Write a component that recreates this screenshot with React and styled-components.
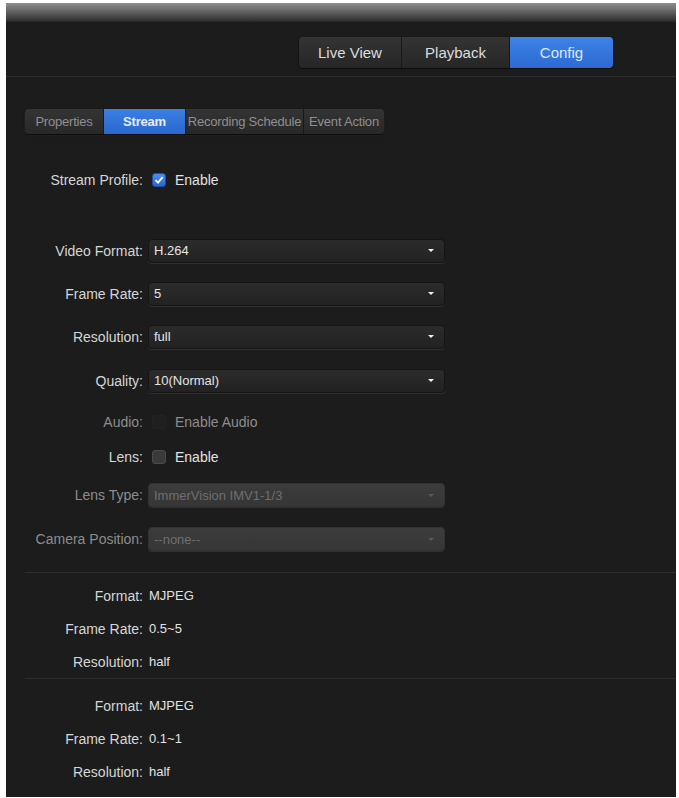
import React from "react";
import styled, { createGlobalStyle } from "styled-components";

const GlobalStyle = createGlobalStyle`
  html, body {
    margin: 0;
    padding: 0;
    background: #ffffff;
    font-family: "Liberation Sans", Arial, sans-serif;
  }
`;

const navItems = [
  { label: "Live View", width: 102 },
  { label: "Playback", width: 107 },
  { label: "Config", width: 103, active: true },
];

const tabs = [
  { label: "Properties", width: 78 },
  { label: "Stream", width: 81, active: true },
  { label: "Recording Schedule", width: 117 },
  { label: "Event Action", width: 80 },
];

const profiles = [
  {
    pad: 6,
    rows: [
      ["Format:", "MJPEG"],
      ["Frame Rate:", "0.5~5"],
      ["Resolution:", "half"],
    ],
  },
  {
    pad: 10,
    rows: [
      ["Format:", "MJPEG"],
      ["Frame Rate:", "0.1~1"],
      ["Resolution:", "half"],
    ],
  },
];

export default function App() {
  return (
    <>
      <GlobalStyle />
      <Frame>
        <Header />
        <NavBar>
          <NavGroup>
            {navItems.map((n) => (
              <NavButton key={n.label} $w={n.width} $active={n.active}>
                {n.label}
              </NavButton>
            ))}
          </NavGroup>
        </NavBar>

        <Content>
          <TabGroup>
            {tabs.map((t) => (
              <Tab key={t.label} $w={t.width} $active={t.active}>
                {t.label}
              </Tab>
            ))}
          </TabGroup>

          <Form>
            <Row $h={30}>
              <Label>Stream Profile:</Label>
              <Check $checked>
                <svg width="10" height="10" viewBox="0 0 10 10">
                  <path d="M1.5 5.2 L4 7.6 L8.6 2.2" fill="none" stroke="#fff" strokeWidth="1.8" />
                </svg>
              </Check>
              <CheckText>Enable</CheckText>
            </Row>

            <Row $h={43} $top={34}>
              <Label>Video Format:</Label>
              <Select>
                <span>H.264</span>
                <Caret />
              </Select>
            </Row>
            <Row $h={43}>
              <Label>Frame Rate:</Label>
              <Select>
                <span>5</span>
                <Caret />
              </Select>
            </Row>
            <Row $h={43}>
              <Label>Resolution:</Label>
              <Select>
                <span>full</span>
                <Caret />
              </Select>
            </Row>
            <Row $h={45}>
              <Label>Quality:</Label>
              <Select>
                <span>10(Normal)</span>
                <Caret />
              </Select>
            </Row>
            <Row $h={38}>
              <Label $dim>Audio:</Label>
              <Check $hidden />
              <CheckText $dim>Enable Audio</CheckText>
            </Row>
            <Row $h={32}>
              <Label>Lens:</Label>
              <Check />
              <CheckText>Enable</CheckText>
            </Row>
            <Row $h={44}>
              <Label $dim>Lens Type:</Label>
              <Select $disabled>
                <span>ImmerVision IMV1-1/3</span>
                <Caret $dim />
              </Select>
            </Row>
            <Row $h={44}>
              <Label $dim>Camera Position:</Label>
              <Select $disabled>
                <span>--none--</span>
                <Caret $dim />
              </Select>
            </Row>
          </Form>

          {profiles.map((p, i) => (
            <React.Fragment key={i}>
              <Divider />
              <Profile $pad={p.pad}>
                {p.rows.map(([k, v]) => (
                  <Row key={k} $h={33}>
                    <Label>{k}</Label>
                    <Value>{v}</Value>
                  </Row>
                ))}
              </Profile>
            </React.Fragment>
          ))}
        </Content>
      </Frame>
    </>
  );
}

const Frame = styled.div`
  margin: 3px 3px 0 6px;
  height: 794px;
  background: #1c1c1c;
  overflow: hidden;
`;

const Header = styled.div`
  height: 19px;
  background: linear-gradient(#8e8e8e, #626262 45%, #3a3a3a 85%, #262626);
`;

const NavBar = styled.div`
  height: 55px;
  box-sizing: border-box;
  padding: 15px 63px 0 0;
  display: flex;
  justify-content: flex-end;
  align-items: flex-start;
  border-bottom: 1px solid #2d2d2d;
`;

const NavGroup = styled.div`
  display: flex;
  border-radius: 4px;
  overflow: hidden;
  box-shadow: 0 1px 2px rgba(0, 0, 0, 0.9), 0 2px 1px rgba(255, 255, 255, 0.05);
`;

const NavButton = styled.div`
  width: ${(p) => p.$w}px;
  height: 31px;
  display: flex;
  align-items: center;
  justify-content: center;
  font-size: 15px;
  color: ${(p) => (p.$active ? "#dfe9fb" : "#dcdcdc")};
  background: ${(p) =>
    p.$active
      ? "linear-gradient(#3d83e6, #2d6ad2)"
      : "linear-gradient(#343434, #262626)"};
  & + & {
    border-left: 1px solid #181818;
  }
`;

const Content = styled.div`
  padding-top: 32px;
`;

const TabGroup = styled.div`
  margin-left: 19px;
  display: inline-flex;
  border-radius: 4px;
  overflow: hidden;
  box-shadow: 0 1px 2px rgba(0, 0, 0, 0.9), 0 1px 0 1px rgba(255, 255, 255, 0.06);
`;

const Tab = styled.div`
  width: ${(p) => p.$w}px;
  height: 25px;
  display: flex;
  align-items: center;
  justify-content: center;
  font-size: 13px;
  letter-spacing: -0.2px;
  white-space: nowrap;
  color: ${(p) => (p.$active ? "#e8eefa" : "#8f8f8f")};
  font-weight: ${(p) => (p.$active ? "bold" : "normal")};
  background: ${(p) =>
    p.$active
      ? "linear-gradient(#3b80e3, #2b67cf)"
      : "linear-gradient(#343434, #282828)"};
  & + & {
    border-left: 1px solid #1a1a1a;
  }
`;

const Form = styled.div`
  margin-top: 31px;
  padding-bottom: 11px;
`;

const Divider = styled.div`
  margin-left: 19px;
  height: 1px;
  background: #2c2c2c;
`;

const Row = styled.div`
  height: ${(p) => p.$h}px;
  margin-top: ${(p) => p.$top || 0}px;
  display: flex;
  align-items: center;
`;

const Label = styled.div`
  width: 137px;
  flex-shrink: 0;
  text-align: right;
  font-size: 14px;
  color: ${(p) => (p.$dim ? "#8c8c8c" : "#d6d6d6")};
  margin-right: 5px;
  white-space: nowrap;
`;

const Select = styled.div`
  width: 297px;
  height: 24px;
  box-sizing: border-box;
  border-radius: 4px;
  display: flex;
  align-items: center;
  justify-content: space-between;
  padding: 0 10px 0 5px;
  font-size: 13px;
  color: ${(p) => (p.$disabled ? "#6e6e6e" : "#e4e4e4")};
  background: ${(p) =>
    p.$disabled
      ? "linear-gradient(#3c3c3c, #363636)"
      : "linear-gradient(#2b2b2b, #222222)"};
  border: 1px solid ${(p) => (p.$disabled ? "#333" : "#151515")};
  box-shadow: 0 1px 0 rgba(255, 255, 255, 0.09);
`;

const Caret = styled.i`
  width: 0;
  height: 0;
  border-left: 3px solid transparent;
  border-right: 3px solid transparent;
  border-top: 3px solid ${(p) => (p.$dim ? "#5a5a5a" : "#f2f2f2")};
`;

const Check = styled.div`
  width: 14px;
  height: 14px;
  margin-left: 4px;
  box-sizing: border-box;
  border-radius: 3px;
  display: flex;
  align-items: center;
  justify-content: center;
  background: ${(p) =>
    p.$checked ? "linear-gradient(#4a8ef0, #2a66d0)" : p.$hidden ? "#1f1f1f" : "#3a3a3a"};
  border: 1px solid ${(p) => (p.$checked ? "#1d4fa8" : p.$hidden ? "#222" : "#4a4a4a")};
`;

const CheckText = styled.span`
  margin-left: 9px;
  font-size: 14px;
  color: ${(p) => (p.$dim ? "#8c8c8c" : "#e2e2e2")};
`;

const Profile = styled.div`
  padding-top: ${(p) => p.$pad}px;
`;

const Value = styled.span`
  margin-left: 1px;
  font-size: 13px;
  color: #e2e2e2;
`;
